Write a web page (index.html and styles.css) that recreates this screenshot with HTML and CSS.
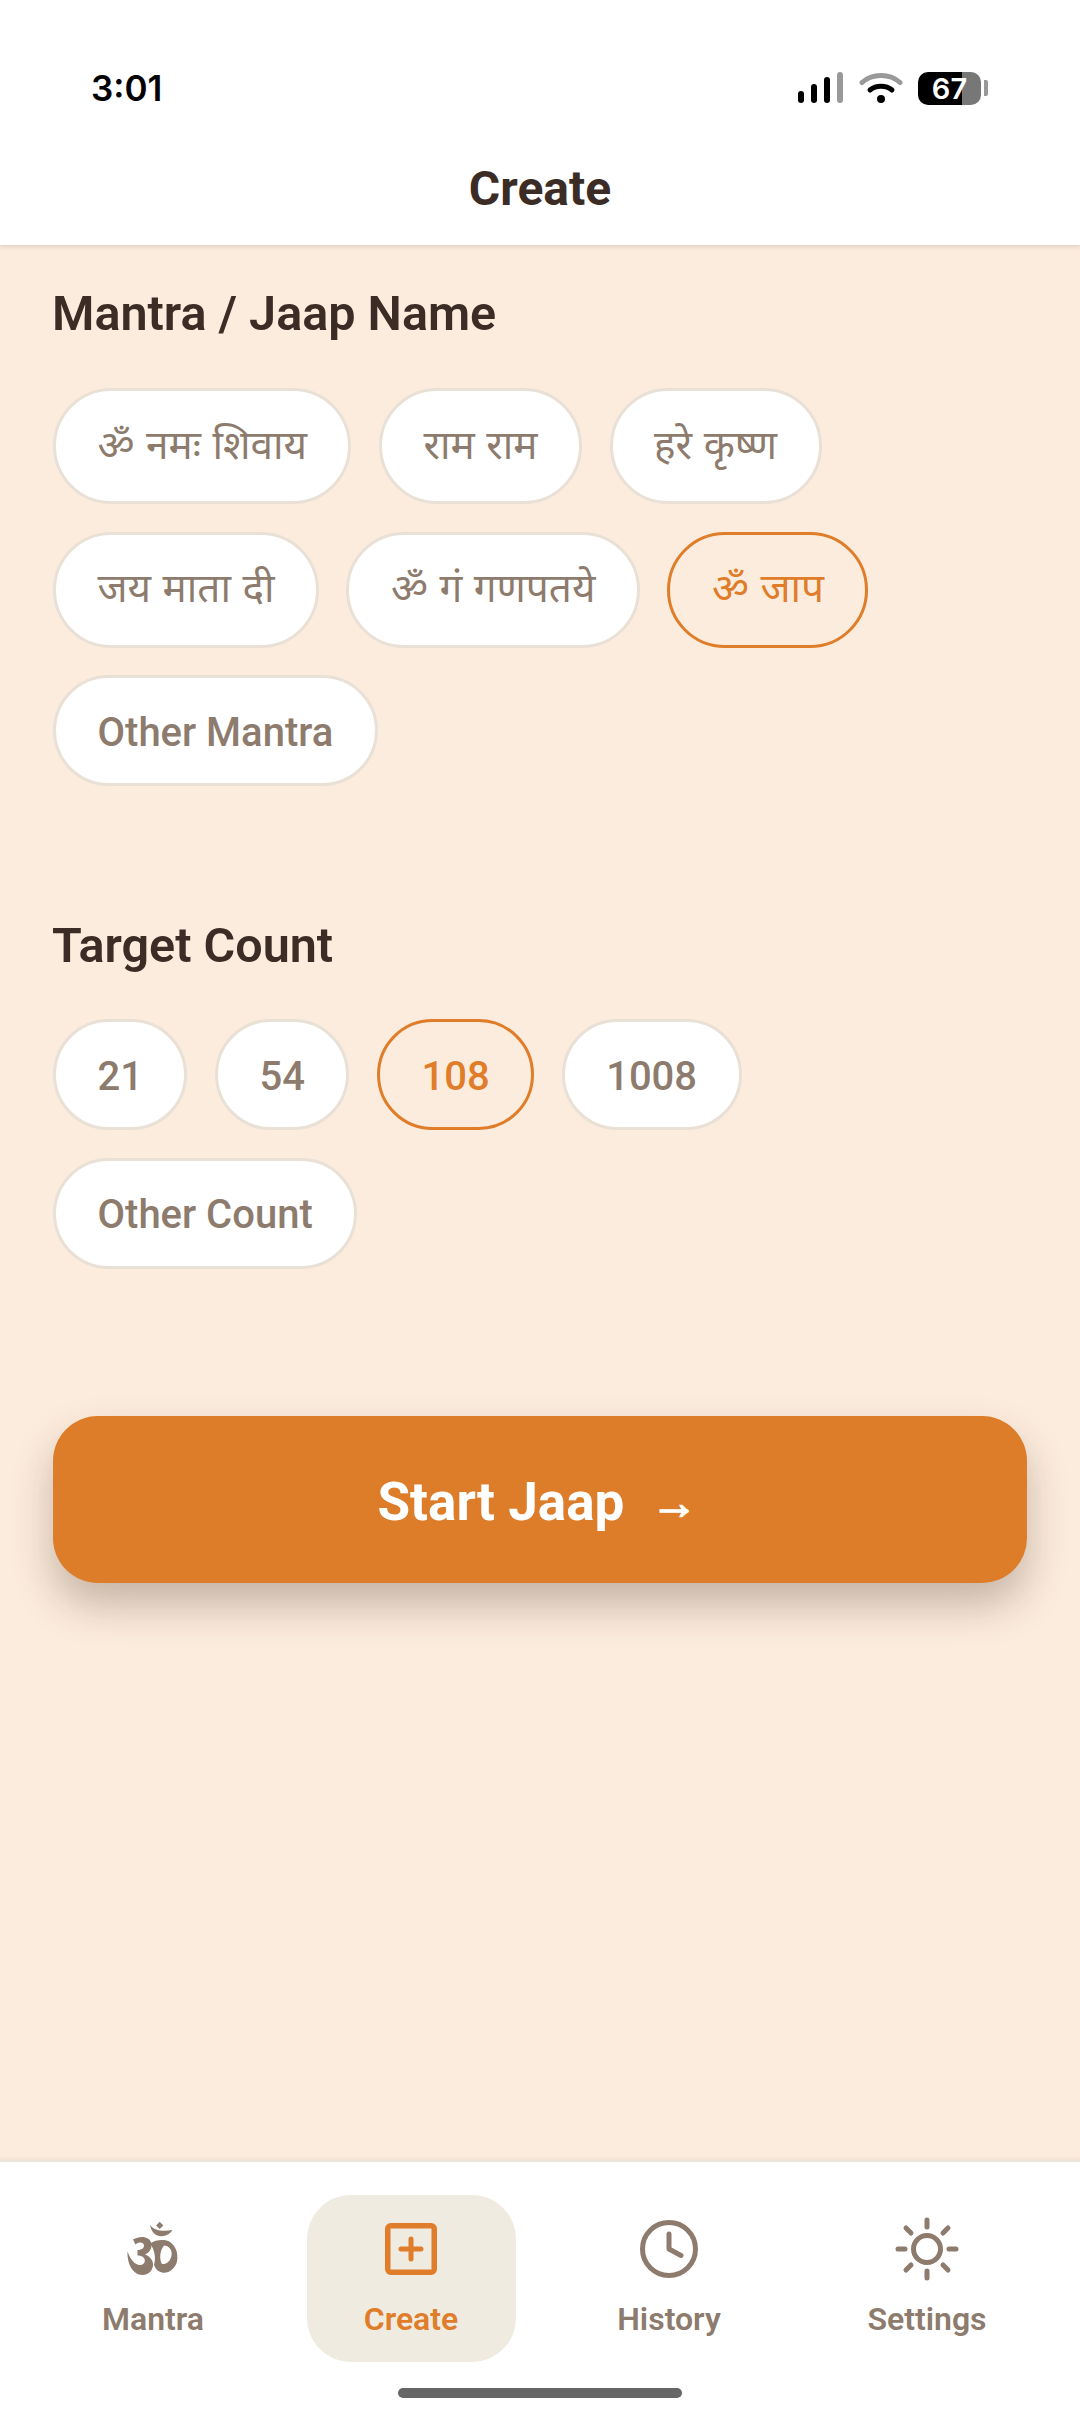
FILE: index.html
```html
<!DOCTYPE html>
<html lang="en">
<head>
    <meta charset="UTF-8">
    <meta name="viewport" content="width=device-width, initial-scale=1.0">
    <title>Create</title>
    <link rel="stylesheet" href="styles.css">
</head>
<body>
    <!-- top -->
    <div class="top">
        <div class="status-bar">
            <span class="time">3:01</span>
            <div class="status-icons">
                <svg class="signal" width="46" height="32" viewBox="0 0 46 32">
                    <rect x="0" y="19" width="6" height="12" rx="3" fill="#000"/>
                    <rect x="13" y="12" width="6" height="19" rx="3" fill="#000"/>
                    <rect x="26" y="5" width="6" height="26" rx="3" fill="#000"/>
                    <rect x="39" y="0" width="6" height="31" rx="3" fill="#999"/>
                </svg>
                <svg class="wifi" width="44" height="32" viewBox="0 0 44 32" fill="none" stroke-linecap="round">
                    <path d="M3 10.5C13 1 31 1 41 10.5" stroke="#999" stroke-width="5"/>
                    <path d="M11 18C17 13 27 13 33 18" stroke="#000" stroke-width="5"/>
                    <circle cx="22" cy="27" r="4" fill="#000"/>
                </svg>
                <div class="battery">
                    <div class="battery-body"><span>67</span></div>
                    <div class="battery-nub"></div>
                </div>
            </div>
        </div>
        <div class="title">Create</div>
    </div>

    <!-- form -->
    <div class="main">
        <div class="section-title">Mantra / Jaap Name</div>
        <div class="chips">
            <div class="chip hi">ॐ नमः शिवाय</div>
            <div class="chip hi">राम राम</div>
            <div class="chip hi">हरे कृष्ण</div>
            <div class="chip hi">जय माता दी</div>
            <div class="chip hi">ॐ गं गणपतये</div>
            <div class="chip hi active">ॐ जाप</div>
            <div class="chip">Other Mantra</div>
        </div>

        <div class="section-title second">Target Count</div>
        <div class="chips">
            <div class="chip">21</div>
            <div class="chip">54</div>
            <div class="chip active">108</div>
            <div class="chip">1008</div>
            <div class="chip">Other Count</div>
        </div>

        <button class="start-btn">Start Jaap <span class="arrow">→</span></button>
    </div>

    <!-- tabs -->
    <div class="tabbar">
        <div class="tab">
            <svg class="tab-icon om" width="72" height="72" viewBox="0 0 72 72" fill="#8d7b6d">
                <path d="M42.7 9.800L46.300 13.400L42.700 17L39.100 13.400Z"/>
                <path d="M33 12.500C36 18.500 46 20 55.500 18C50.500 26.500 35 27.500 33 12.500Z"/>
                <path d="M16 27.500C23 23.500 33 24 34.500 32C35 37 32 41 28 42.500C33 44.500 36.500 48.500 36 53.500C35.500 59 31 63 25.500 63C16 63 10 52 10.500 39.500C13.500 48 19 54 24 53C28 52.200 29 48 26.500 45.500C25 44 22.500 43.500 20.500 43.500L20.500 38C24 38 27 36.500 27 33.500C27 30 22 29.500 18.500 32.500Z"/>
                <path fill-rule="evenodd" d="M33 31.500C39 27.500 48 27 53 30C59 34 61.500 42 60 49.500C58 57 51 62 45 60.500C41 59.500 38.500 57 37 53C39 47 38 38 33 31.500ZM47 33.500C43 38 42 47 45 52C51 53 55.500 46 54.500 40C54 36.500 51 33.500 47 33.500Z"/>
            </svg>
            <div class="tab-label">Mantra</div>
        </div>
        <div class="tab active">
            <svg class="tab-icon" width="60" height="60" viewBox="0 0 60 60" fill="none" stroke="#df7d2a" stroke-linecap="round">
                <rect x="6.750" y="6.750" width="46.500" height="46.500" rx="3" stroke-width="5.500"/>
                <path d="M30 20V40M20 30H40" stroke-width="5"/>
            </svg>
            <div class="tab-label">Create</div>
        </div>
        <div class="tab">
            <svg class="tab-icon" width="60" height="60" viewBox="0 0 60 60" fill="none" stroke="#8d7b6d" stroke-linecap="round" stroke-linejoin="round">
                <circle cx="30" cy="30" r="26.500" stroke-width="5"/>
                <path d="M30 15V30L42 36.500" stroke-width="5"/>
            </svg>
            <div class="tab-label">History</div>
        </div>
        <div class="tab">
            <svg class="tab-icon sun" width="64" height="64" viewBox="0 0 64 64" fill="none" stroke="#8d7b6d" stroke-width="5" stroke-linecap="round">
                <circle cx="32" cy="32" r="13.500"/>
                <path d="M32 3V10M32 54V61M3 32H10M54 32H61M11 11L16 16M48 48L53 53M11 53L16 48M48 16L53 11"/>
            </svg>
            <div class="tab-label">Settings</div>
        </div>
    </div>
    <div class="home-bar"></div>
</body>
</html>
```
FILE: styles.css
```css
/* page */
body {
    width: 1080px;
    height: 2424px;
    margin: 0;
    display: flex;
    flex-direction: column;
    position: relative;
    overflow: hidden;
    font-family: Roboto, "Noto Sans Devanagari", "Noto Sans", sans-serif;
    background: #fcecdd;
    color: #3b2d26;
}

/* top */
.top {
    height: 245px;
    background: #fff;
    box-shadow: 0 1px 5px rgba(90, 70, 50, 0.22);
    position: relative;
    z-index: 1;
}

.status-bar {
    display: flex;
    align-items: center;
    justify-content: space-between;
    height: 34px;
    padding: 71px 92px 0 91px;
}

.time {
    font-family: Inter, sans-serif;
    font-size: 35px;
    font-weight: 600;
    color: #000;
}

.status-icons {
    display: flex;
    align-items: center;
    gap: 15px;
}

.battery {
    display: flex;
    align-items: center;
    gap: 3px;
}

.battery-body {
    width: 63px;
    height: 33px;
    border-radius: 10px;
    background: linear-gradient(90deg, #000 70%, #777 70%);
    color: #fff;
    font-family: Inter, sans-serif;
    font-size: 29px;
    font-weight: 600;
    text-align: center;
    line-height: 33px;
}

.battery-nub {
    width: 4px;
    height: 16px;
    border-radius: 0 2px 2px 0;
    background: #999;
}

.title {
    margin-top: 57px;
    text-align: center;
    font-size: 48px;
    font-weight: 700;
    line-height: 54px;
}

/* form */
.main {
    flex: 1;
    padding: 42px 53px 0 53px;
}

.section-title {
    margin-left: -1px;
    font-size: 48.500px;
    font-weight: 600;
    line-height: 54px;
    margin-bottom: 47px;
}

.section-title.second {
    margin-top: 133px;
    margin-bottom: 46px;
}

.chips {
    display: flex;
    flex-wrap: wrap;
    gap: 27.5px;
}

.chip {
    box-sizing: border-box;
    height: 111px;
    padding: 3px 41.500px 0;
    display: flex;
    align-items: center;
    border: 3px solid #e9e0d6;
    border-radius: 58px;
    background: #fff;
    font-size: 40px;
    font-weight: 500;
    color: #8d7b6d;
}

.chip.hi {
    height: 116px;
    padding: 4px 41.500px 0;
    font-size: 40.500px;
    font-weight: 450;
    word-spacing: 1.500px;
}

.chip.active {
    border-color: #df7d2a;
    background: none;
    color: #df7d2a;
}

.start-btn {
    display: block;
    width: 974px;
    height: 167px;
    margin-top: 147.5px;
    padding: 5px 5px 0 0;
    border: none;
    border-radius: 45px;
    background: #dd7d2a;
    box-shadow: 0 22px 40px rgba(60, 40, 20, 0.28);
    color: #fff;
    font-family: inherit;
    font-size: 53px;
    font-weight: 700;
}

.arrow {
    margin-left: 13px;
    font-family: "Liberation Sans", sans-serif;
    font-size: 47px;
    vertical-align: 1px;
    -webkit-text-stroke: 1.500px #fff;
}

/* tabs */
.tabbar {
    height: 264px;
    box-sizing: border-box;
    display: grid;
    grid-template-columns: repeat(4, 1fr);
    padding: 33px 24px 0;
    align-items: start;
    justify-items: center;
    background: #fff;
    border-top: 2px solid #ebe5dc;
    box-shadow: 0 -1px 4px rgba(90, 70, 50, 0.08);
}

.tab {
    width: 209px;
    height: 167px;
    display: flex;
    flex-direction: column;
    align-items: center;
    border-radius: 44px;
    font-size: 32px;
    font-weight: 600;
    color: #8d7b6d;
}

.tab.active {
    background: #efebe1;
    color: #df7d2a;
}

.tab-icon {
    margin-top: 24px;
    height: 60px;
}

.tab-icon.sun {
    height: 64px;
    margin: 22px 0 -2px;
}

.tab-icon.om {
    height: 72px;
    margin: 17px 0 -5px;
}

.tab-label {
    margin-top: 21px;
    line-height: 38px;
}

.home-bar {
    position: absolute;
    left: 398px;
    top: 2388px;
    width: 284px;
    height: 10px;
    border-radius: 5px;
    background: #666;
}
```
